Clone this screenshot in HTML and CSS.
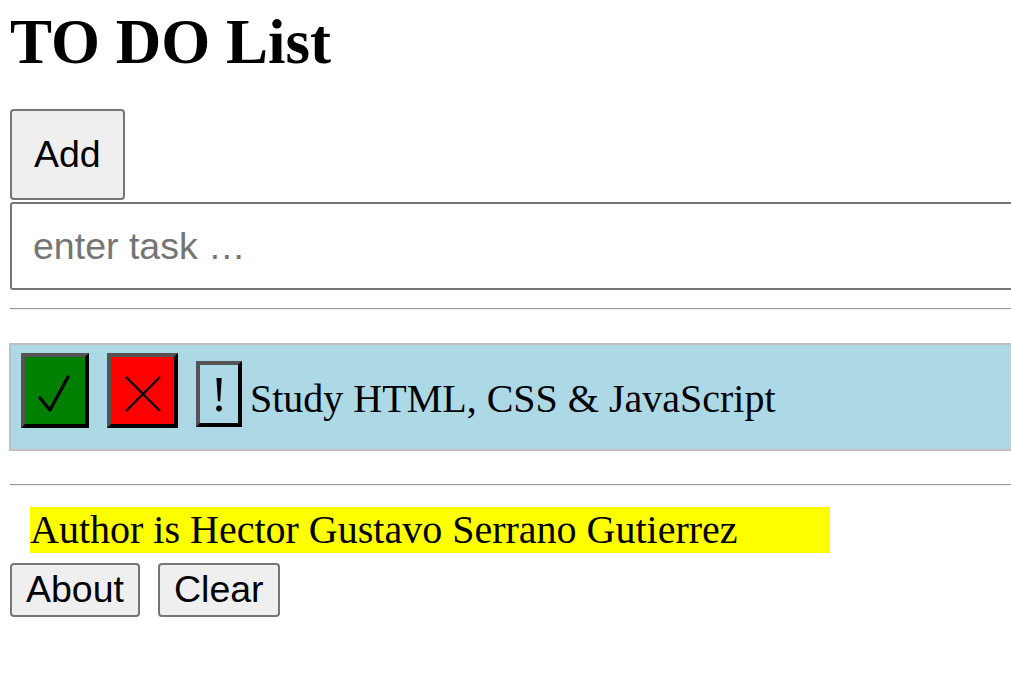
FILE: index.html
```html
<!DOCTYPE html>
<html lang="en">
<head>
<meta charset="utf-8">
<title>TO DO List</title>
<link rel="stylesheet" href="styles.css">
</head>
<body>
<div class="page">
  <h1 class="title">TO DO List</h1>
  <button class="btn btn-add" type="button">Add</button>
  <input class="task-input" type="text" placeholder="enter task …">
  <hr class="rule rule-top">
  <div class="task">
    <button class="task-btn done" type="button" aria-label="done">
      <svg width="60" height="67" viewBox="0 0 60 67"><path d="M15 41 L25 53 L43 20" fill="none" stroke="#000" stroke-width="3.4" stroke-linecap="round" stroke-linejoin="round"/></svg>
    </button>
    <button class="task-btn remove" type="button" aria-label="remove">
      <svg width="63" height="67" viewBox="0 0 63 67"><path d="M15 20 L49 54 M49 20 L15 54" fill="none" stroke="#000" stroke-width="2.4"/></svg>
    </button>
    <span class="prio">!</span>
    <span class="task-text">Study HTML, CSS &amp; JavaScript</span>
  </div>
  <hr class="rule rule-bottom">
  <div class="author">Author is Hector Gustavo Serrano Gutierrez</div>
  <div class="actions">
    <button class="btn btn-small" type="button">About</button>
    <button class="btn btn-small" type="button">Clear</button>
  </div>
</div>
</body>
</html>
```

FILE: styles.css
```css
html, body {
  margin: 0;
  padding: 0;
  background: #fff;
  overflow: hidden;
}

body {
  font-family: "Liberation Serif", "Times New Roman", serif;
  color: #000;
}

.page {
  width: 1100px;
  padding-left: 10px;
}

.title {
  font-family: "Liberation Serif", "Times New Roman", serif;
  font-weight: bold;
  font-size: 63px;
  line-height: normal;
  margin: 6px 0 30px;
}

.btn {
  display: block;
  font-family: "Liberation Sans", Arial, sans-serif;
  font-size: 37.5px;
  line-height: normal;
  color: #000;
  background: #efefef;
  border: 2px solid #767676;
  border-radius: 4px;
  margin: 0;
}

.btn-add {
  padding: 22px 22px;
}

.task-input {
  display: block;
  box-sizing: border-box;
  width: 100%;
  margin: 2px 0 0;
  height: 88px;
  padding: 0 21px;
  font-family: "Liberation Sans", Arial, sans-serif;
  font-size: 37.5px;
  border: 2px solid #767676;
  border-radius: 3px;
  background: #fff;
  color: #000;
}

.task-input::placeholder {
  color: #757575;
}

.rule {
  margin: 0;
  height: 0;
  border: 0;
  border-top: 1px solid #9a9a9a;
  border-bottom: 1px solid #eeeeee;
}

.rule-top {
  margin-top: 18px;
}

.task {
  margin-top: 33px;
  box-sizing: border-box;
  height: 108px;
  display: flex;
  align-items: flex-start;
  padding: 8px 0 0 10px;
  background: #add8e6;
  border: 2px solid #c0c0c0;
  margin-left: -1px;
}

.task-btn {
  box-sizing: border-box;
  padding: 0;
  margin: 0 18px 0 0;
  height: 75px;
  border: 4px solid;
  border-color: #545454 #000 #000 #545454;
  border-radius: 0;
  display: flex;
  align-items: center;
  justify-content: center;
}

.task-btn svg {
  display: block;
}

.done {
  width: 68px;
  background: #008000;
}

.remove {
  width: 71px;
  background: #ff0000;
}

.prio {
  box-sizing: border-box;
  width: 46px;
  height: 66px;
  margin-top: 8px;
  border: 4px solid;
  border-color: #545454 #000 #000 #545454;
  font-family: "Liberation Serif", "Times New Roman", serif;
  font-size: 50px;
  line-height: 58px;
  text-align: center;
}

.task-text {
  margin: 23px 0 0 8px;
  font-size: 40px;
  line-height: 46px;
}

.rule-bottom {
  margin-top: 33px;
}

.author {
  margin: 21px 0 0 20px;
  width: 800px;
  background: #ffff00;
  font-size: 40px;
  line-height: 46px;
}

.actions {
  display: flex;
  gap: 18px;
  margin-top: 10px;
}

.btn-small {
  padding: 3px 14px 4px;
}
```
